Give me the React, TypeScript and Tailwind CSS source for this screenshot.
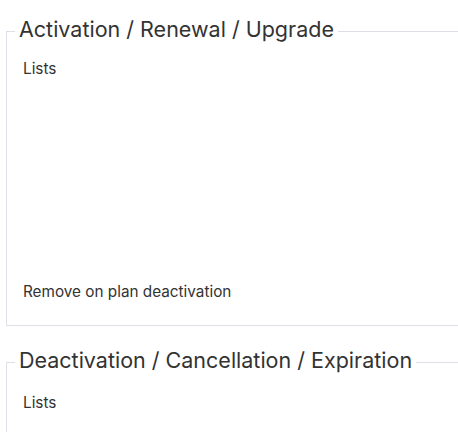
import React from 'react';

function Section({ title, children, tight }: { title: string; children?: React.ReactNode; tight?: boolean }) {
  return (
    <fieldset className="border border-[#dedee6] w-[480px] px-2 pb-[22px]">
      <legend className="px-1 pb-[4px] text-[21.5px] leading-[26px]">{title}</legend>
      <div className={tight ? 'pl-2 pt-[12px] text-[15.3px] leading-[22px]' : 'pl-2 pt-[15px] text-[15.3px] leading-[22px]'}>
        {children}
      </div>
    </fieldset>
  );
}

export default function App() {
  return (
    <div className="w-[458px] h-[432px] overflow-hidden bg-white pt-[16px] pl-[6px] font-['Inter',sans-serif] text-[#333]">
      <Section title="Activation / Renewal / Upgrade" tight>
        <div>Lists</div>
        <div className="h-[201px]" />
        <div>Remove on plan deactivation</div>
      </Section>
      <div className="mt-[21px]">
        <Section title="Deactivation / Cancellation / Expiration">
          <div>Lists</div>
          <div className="h-[200px]" />
        </Section>
      </div>
    </div>
  );
}
